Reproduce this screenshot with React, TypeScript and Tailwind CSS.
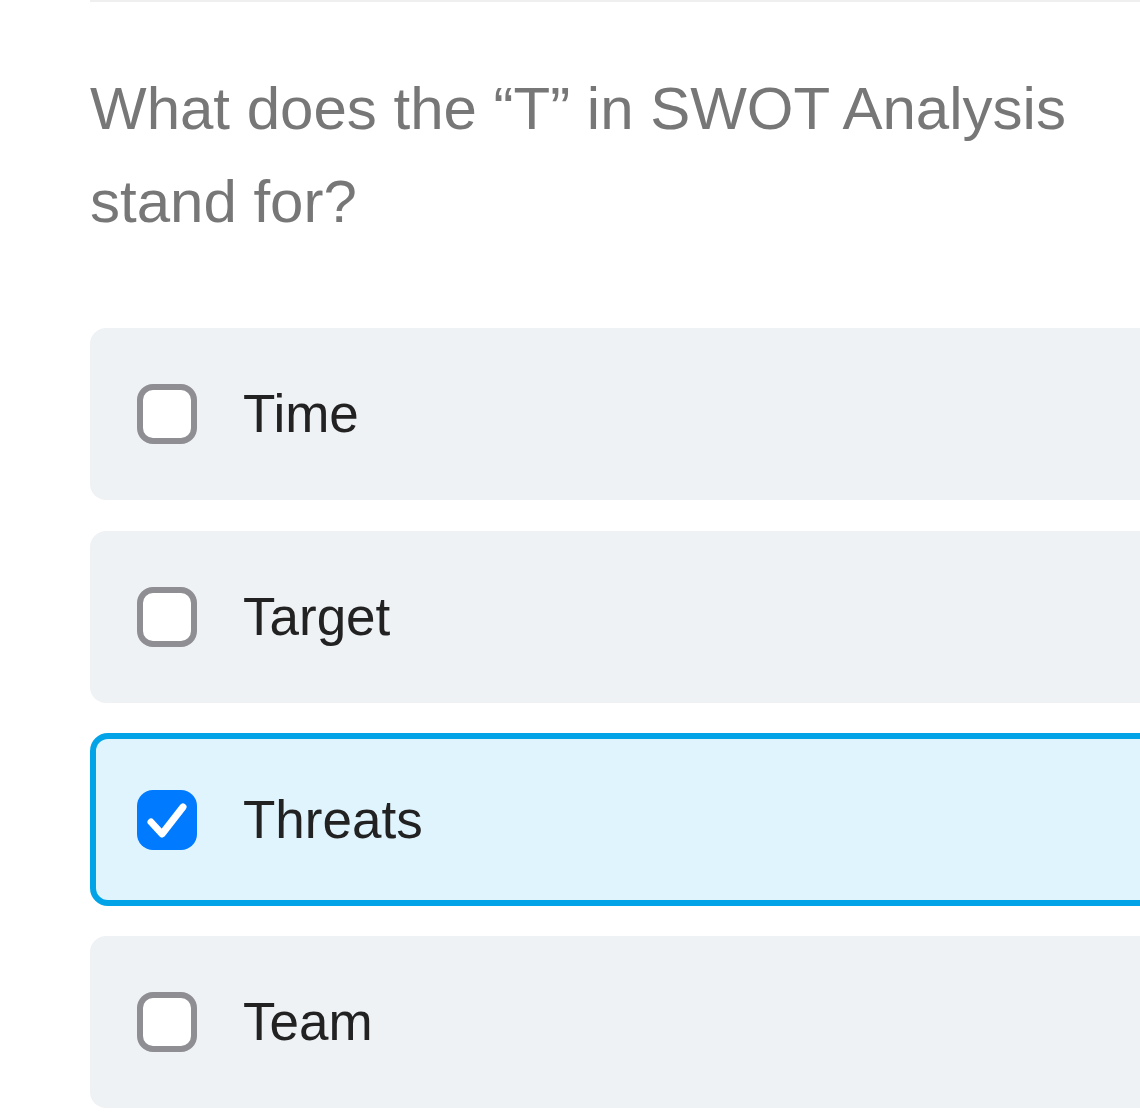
import React from 'react';

const options = [
    { label: 'Time', checked: false },
    { label: 'Target', checked: false },
    { label: 'Threats', checked: true },
    { label: 'Team', checked: false },
];

function Checkbox({ checked }: { checked: boolean }) {
    if (checked) {
        return (
            <div className="w-[60px] h-[60px] rounded-[16px] bg-[#007aff] shrink-0">
                <svg width="60" height="60" viewBox="0 0 60 60" fill="none">
                    <path d="M14 32 L25 44 L46 17" stroke="white" strokeWidth="7" strokeLinecap="round" strokeLinejoin="round" />
                </svg>
            </div>
        );
    }
    return <div className="w-[60px] h-[60px] rounded-[16px] border-[6px] border-[#8e8e93] bg-white shrink-0" />;
}

export default function App() {
    return (
        <div className="w-full h-[1115px] bg-white overflow-hidden" style={{ fontFamily: '"Liberation Sans", Arial, sans-serif' }}>
            <div className="ml-[90px] w-[1100px] border-t-2 border-[#efefef]">
                <h1 className="pt-[60px] text-[60px] leading-[93px] text-[#777777] font-normal w-[1000px]">
                    What does the “T” in SWOT Analysis stand for?
                </h1>
                <div className="mt-[80px] flex flex-col gap-[31px]">
                    {options.map((opt) => (
                        <div
                            key={opt.label}
                            className={
                                opt.checked
                                    ? 'h-[173px] -my-[1px] rounded-[18px] border-[6px] border-[#03a4e7] bg-[#e0f4fd] flex items-center pl-[41px] gap-[46px]'
                                    : 'h-[172px] rounded-[16px] bg-[#eff2f5] flex items-center pl-[47px] gap-[46px]'
                            }
                        >
                            <Checkbox checked={opt.checked} />
                            <span className="text-[53px] text-[#222222]">{opt.label}</span>
                        </div>
                    ))}
                </div>
            </div>
        </div>
    );
}
